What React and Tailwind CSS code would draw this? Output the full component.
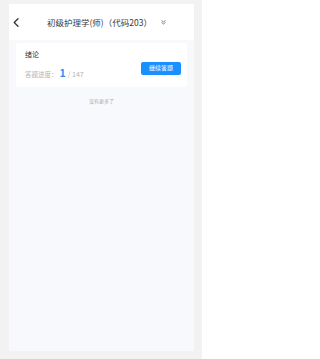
import React from 'react';

const font = { fontFamily: '"Noto Sans CJK SC", "Noto Sans", sans-serif' };

const BackIcon = () => (
    <svg width="6" height="9" viewBox="0 0 6 9" fill="none">
        <path d="M5 0.8 L1.2 4.5 L5 8.2" stroke="#333" strokeWidth="1.3" strokeLinecap="round" strokeLinejoin="round" />
    </svg>
);

const ExpandIcon = () => (
    <svg width="5" height="5" viewBox="0 0 5 5" fill="none">
        <path d="M0.8 0.6 L2.5 2 L4.2 0.6" stroke="#777" strokeWidth="0.9" strokeLinecap="round" strokeLinejoin="round" />
        <path d="M0.8 2.6 L2.5 4 L4.2 2.6" stroke="#777" strokeWidth="0.9" strokeLinecap="round" strokeLinejoin="round" />
    </svg>
);

const App = () => {
    return (
        <div className="w-[202px] h-[359px] bg-[#f2f2f2] pt-[4px] pl-[9px] pr-[8px] pb-[8px]" style={font}>
            <div className="h-[347px] flex flex-col bg-[#f8f9fd]">
                {/* header */}
                <div className="h-[36px] bg-white flex items-center pl-[4px] shrink-0">
                    <BackIcon />
                    <span className="ml-[28px] text-[8.5px] leading-[10px] text-[#3a3a3a] whitespace-nowrap">初级护理学(师)（代码203）</span>
                    <span className="ml-[9px] flex items-center"><ExpandIcon /></span>
                </div>

                <div className="px-[7px] pt-[3px]">
                    {/* chapter card */}
                    <div className="h-[44px] bg-white rounded-[2px] flex items-start justify-between pl-[9px] pr-[6px]">
                        <div className="flex flex-col pt-[8px]">
                            <span className="text-[7px] leading-[7px] text-[#333]">绪论</span>
                            <div className="mt-[10px] flex items-baseline leading-[10px] whitespace-nowrap">
                                <span className="text-[6.5px] text-[#b4b4b4]">答题进度：</span>
                                <span className="ml-[2px] text-[10.5px] font-semibold text-[#2f8ff0]">1</span>
                                <span className="ml-[2px] text-[7px] text-[#b4b4b4]">/ 147</span>
                            </div>
                        </div>
                        <button className="mt-[19px] w-[40px] h-[12.5px] rounded-[2px] bg-[#1890ff] text-white text-[6px] leading-[12.5px] text-center">
                            继续答题
                        </button>
                    </div>

                    <p className="mt-[10.5px] text-center text-[5px] leading-[5px] text-[#aaa]">没有更多了</p>
                </div>
            </div>
        </div>
    );
};

export default App;
